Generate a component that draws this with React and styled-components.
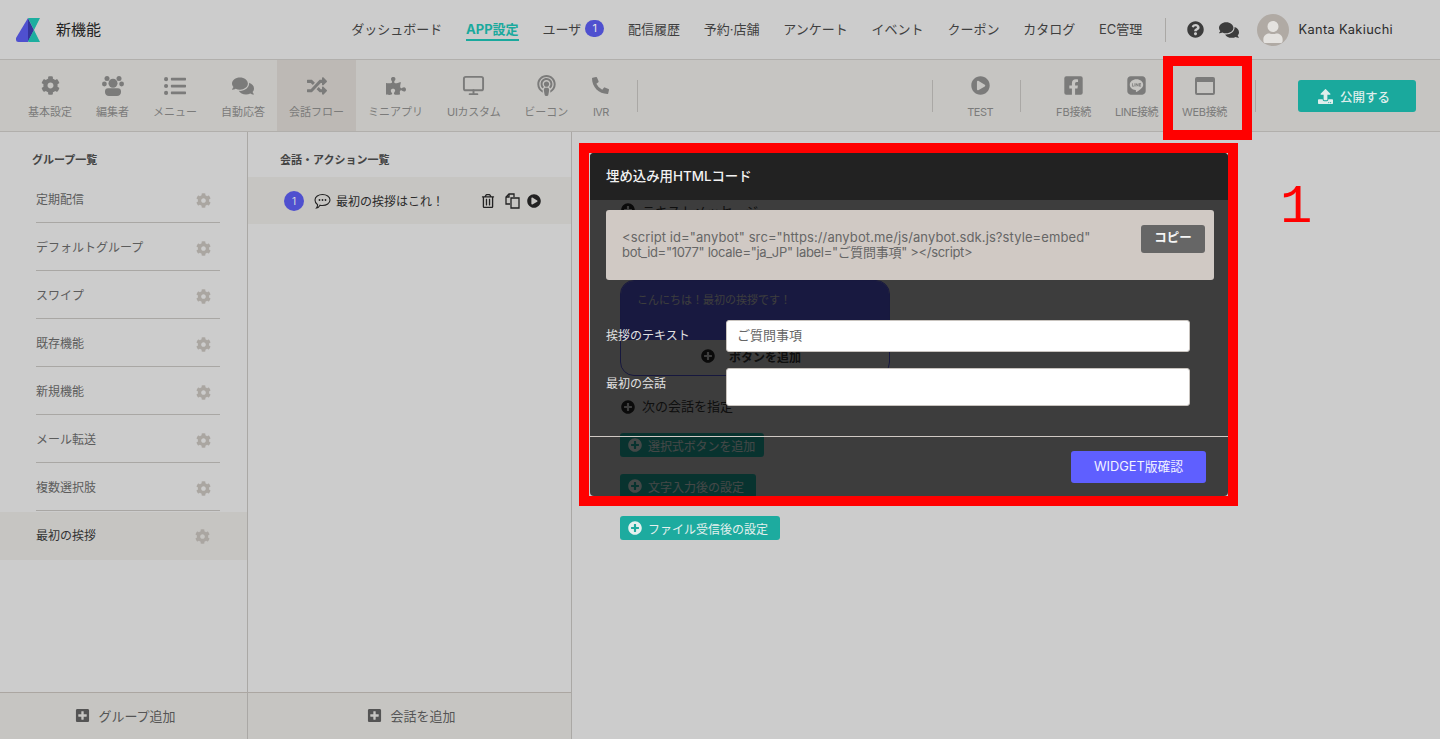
import React from "react";
import styled, { createGlobalStyle } from "styled-components";
import {
  FaCog, FaListUl, FaComments, FaRandom, FaPuzzlePiece, FaPodcast, FaPhoneAlt,
  FaPlayCircle, FaFacebookSquare, FaLine, FaQuestionCircle, FaUser, FaUpload, FaPlusCircle,
  FaPlusSquare, FaRegTrashAlt,
} from "react-icons/fa";
import { FiMonitor } from "react-icons/fi";

const Global = createGlobalStyle`
  html, body { margin: 0; padding: 0; height: 100%; background: #ccc; overflow: hidden; }
  body { font-family: Inter, "Noto Sans CJK JP", sans-serif; color: #333; }
  * { box-sizing: border-box; }
`;

const Page = styled.div`position: relative; width: 1440px; height: 739px; display: flex; flex-direction: column; overflow: hidden; background: #ccc;`;
const Header = styled.header`height: 60px; flex: none; display: flex; align-items: center; padding: 0 47px 0 16px; border-bottom: 1px solid #b1afac;`;
const BrandName = styled.div`margin: -2px 0 0 16px; font-size: 15px; color: #222;`;
const Nav = styled.nav`margin-left: auto; display: flex; align-items: center; gap: 23.8px; height: 100%;`;
const NavItem = styled.a`
  display: flex; align-items: center; gap: 4px; font-size: 13px; height: 23px; white-space: nowrap; padding-bottom: 1px;
  color: ${(p) => (p.$active ? "#1aa99d" : "#3f3f3f")};
  font-weight: ${(p) => (p.$active ? 700 : 400)};
  border-bottom: 2px solid ${(p) => (p.$active ? "#1aa99d" : "transparent")};
`;
const Badge = styled.span`width: 19px; height: 17px; border-radius: 9px; background: #4f50cf; color: #e6e6e6; font-size: 11px; display: flex; align-items: center; justify-content: center;`;
const VLine = styled.span`width: 1px; height: 24px; background: #aaa8a5; margin-left: -1px;`;
const HeadIcons = styled.div`display: flex; align-items: center; gap: 15px; color: #3c3c3c; font-size: 19px; margin-left: -3px;`;
const Avatar = styled.div`width: 32px; height: 32px; border-radius: 50%; background: #b0aaa4; color: #e4e2df; display: flex; align-items: flex-end; justify-content: center; font-size: 22px; overflow: hidden; margin-left: -6px; padding-bottom: 3px;`;
const UserName = styled.span`font-size: 12.8px; color: #2b2b2b; margin-left: -14px; letter-spacing: .33px;`;

const Toolbar = styled.div`height: 72px; flex: none; display: flex; padding: 0 24px 0 16px; background: #c6c5c2; border-bottom: 1px solid #b1afac;`;
const ToolItem = styled.div`
  height: 71px; padding: 14px 12px 0; display: flex; flex-direction: column; align-items: center;
  color: #7b7b7a; white-space: nowrap;
  background: ${(p) => (p.$active ? "#bdb9b5" : "transparent")};
`;
const ToolIcon = styled.div`height: 23px; display: flex; align-items: center; justify-content: center; font-size: ${(p) => p.$size || 20}px;`;
const ToolLabel = styled.div`font-size: 11px; line-height: 16px; margin-top: 7px; letter-spacing: ${(p) => p.$ls || 0}px;`;
const ToolSep = styled.span`width: 1px; height: 32px; margin: 20px ${(p) => p.$r || 0}px 0 ${(p) => p.$l || 0}px; background: #aaa8a5;`;
const Spacer = styled.div`flex: 1;`;
const Publish = styled.button`
  width: 118px; height: 32px; margin: 20px 0 0 42px; padding: 0 6px 0 0; border: 0; border-radius: 3px; background: #1aa99d; color: #dfeeec;
  font: 500 12.5px Inter, "Noto Sans CJK JP", sans-serif; display: flex; align-items: center; justify-content: center; gap: 7px;
  svg { font-size: 15px; }
`;

const Main = styled.div`flex: 1; display: flex; min-height: 0;`;
const Column = styled.section`width: ${(p) => p.$w}px; flex: none; display: flex; flex-direction: column; border-right: 1px solid #aaa8a5;`;
const ColTitle = styled.h2`margin: 0; height: ${(p) => p.$h}px; padding: 21px 0 0 ${(p) => p.$pad}px; font-size: 11px; line-height: 14px; font-weight: 700; color: #444;`;
const ColBody = styled.div`flex: 1;`;
const GroupRow = styled.div`height: 48px; display: flex; align-items: center; padding: 0 36px 0 36px; background: ${(p) => (p.$active ? "#c6c5c2" : "transparent")}; color: ${(p) => (p.$active ? "#333" : "#5c5c5c")};`;
const GroupLine = styled.div`height: 1px; margin: -2px 27px 1px 36px; background: #a9a7a4;`;
const GroupName = styled.span`flex: 1; font-size: 12px; margin-top: -3px;`;
const Gear = styled(FaCog)`color: #aaa6a1; font-size: 15px; margin-right: ${(p) => (p.$shift ? "1px" : 0)};`;
const Footer = styled.div`height: 47px; padding: 0 0 2px 4px; border-top: 1px solid #aba6a1; background: #c6c5c2; display: flex; align-items: center; justify-content: center; gap: 8px; font-size: 13px; color: #555; svg { font-size: 15px; color: #545454; }`;
const FlowRow = styled.div`height: 47px; background: #c6c5c2; display: flex; align-items: center; padding: 0 30px 0 36px; color: #333;`;
const StepNum = styled.span`width: 20px; height: 20px; border-radius: 50%; background: #4f50cf; color: #ddd; font-size: 10px; display: flex; align-items: center; justify-content: center;`;
const FlowText = styled.span`flex: 1; font-size: 12px; margin-left: 5px; color: #2b2b2b;`;
const RowIcons = styled.div`display: flex; align-items: center; gap: 6px; font-size: 14px; color: #222;`;
const Trash = styled(FaRegTrashAlt)`margin-right: 4px;`;
const ChatGlyph = styled.svg`margin-left: 10px; flex: none;`;

const Canvas = styled.div`flex: 1; padding: 68px 0 0 48px; display: flex; flex-direction: column; align-items: flex-start;`;
const AddLine = styled.div`display: flex; align-items: center; gap: 7px; height: 20px; font-size: 13px; color: #333; padding-left: 1px; svg { font-size: 14px; color: #222; }`;
const AddText = styled.span`margin-top: ${(p) => p.$up || 0}px;`;
const Bubble = styled.div`width: 270px; height: 96px; margin: 60px 0 21px; border: 1px solid #4f50cf; border-radius: 14px; display: flex; flex-direction: column; overflow: hidden;`;
const BubbleText = styled.div`height: 59px; padding: 11px 16px; background: #5255d6; font-size: 11px; line-height: 16px; color: #ccc;`;
const BubbleAdd = styled.div`flex: 1; display: flex; align-items: center; justify-content: center; gap: 14px; padding: 0 8px 3px 0; font-size: 12px; font-weight: 700; color: #333; svg { font-size: 14px; color: #222; }`;
const TealButton = styled.div`width: ${(p) => p.$w}px; height: 24px; margin-top: ${(p) => p.$mt}px; padding-left: 8px; border-radius: 3px; background: #1dab9f; color: #e4f0ee; font-size: 12px; letter-spacing: ${(p) => p.$ls || 0}px; display: flex; align-items: center; gap: 6px; white-space: nowrap; svg { font-size: 14px; }`;

const Backdrop = styled.div`position: absolute; left: 590px; top: 153px; width: 638px; height: 343px; border-radius: 4px; overflow: hidden; background: rgba(0,0,0,.7); display: flex; flex-direction: column;`;
const ModalHead = styled.div`height: 47px; flex: none; background: #222; color: #f2f2f2; font-size: 13.4px; font-weight: 500; display: flex; align-items: center; padding: 0 0 4px 16px;`;
const ModalBody = styled.div`flex: 1; padding: 10px 14px 0 16px;`;
const CodeBox = styled.div`height: 70px; width: 608px; background: #d0c9c4; border-radius: 3px; padding: 20px 9px 0 16px; display: flex; justify-content: space-between; align-items: flex-start;`;
const Code = styled.div`font-size: 13px; line-height: 15px; color: #666; white-space: nowrap;`;
const CodeLine = styled.div`letter-spacing: ${(p) => p.$ls}px;`;
const CopyButton = styled.button`width: 64px; height: 28px; margin-top: -5px; padding: 0 0 5px; border: 0; border-radius: 3px; background: #666; color: #f5f5f5; font: 700 12.5px "Noto Sans CJK JP", sans-serif;`;
const FormRow = styled.div`display: flex; align-items: center; margin-top: ${(p) => p.$mt}px;`;
const FormLabel = styled.label`width: 120px; font-size: 12px; color: #e0e0e0; margin-top: ${(p) => p.$mt || 0}px;`;
const TextField = styled.div`width: 464px; height: ${(p) => p.$h}px; background: #fff; border: 1px solid #c9c4bf; border-radius: 3px; padding: 0 10px 4px; display: flex; align-items: center; font-size: 13px; color: #666;`;
const ModalFoot = styled.div`height: 60px; flex: none; border-top: 1px solid #d0c9c4; display: flex; justify-content: flex-end; padding: 14px 22px 0 0;`;
const WidgetButton = styled.button`width: 135px; height: 32px; padding: 0 0 4px; border: 0; border-radius: 3px; background: #5f5fff; color: #f2f2ff; font: 400 12.8px Inter, "Noto Sans CJK JP", sans-serif;`;

const RedFrame = styled.div`position: absolute; left: ${(p) => p.$x}px; top: ${(p) => p.$y}px; width: ${(p) => p.$w}px; height: ${(p) => p.$h}px; border: 10px solid #f00;`;
const RedNumber = styled.div`position: absolute; left: 1280px; top: 178px; font: 400 54px/60px "Liberation Mono", monospace; color: #f00;`;

const Logo = () => (
  <svg width="24" height="24" viewBox="0 0 24 24">
    <path d="M12 0L0 20v1.5A2.5 2.5 0 0 0 2.5 24H12z" fill="#4f50cf" />
    <path d="M12 0l6 12-6 12z" fill="#34349a" />
    <path d="M12 0h12l-6 12 6 12H14a2 2 0 0 1-2-1l6-11z" fill="#1cae9f" />
  </svg>
);
const UsersIcon = () => (
  <svg width="22" height="20" viewBox="0 0 22 20" fill="currentColor">
    <circle cx="5" cy="2.500" r="2.500" />
    <circle cx="17" cy="2.500" r="2.500" />
    <circle cx="2.400" cy="8" r="2.400" />
    <circle cx="19.600" cy="8" r="2.400" />
    <circle cx="11" cy="7.300" r="4.500" />
    <path d="M6 12.300h10c1.800 0 3 1.200 3 3v1c0 2.200-1.800 3.700-4 3.700H7c-2.200 0-4-1.500-4-3.700v-1c0-1.800 1.200-3 3-3z" />
  </svg>
);
const WindowIcon = () => (
  <svg width="20" height="18" viewBox="0 0 20 18">
    <path fillRule="evenodd" d="M2 0h16a2 2 0 0 1 2 2v14a2 2 0 0 1-2 2H2a2 2 0 0 1-2-2V2a2 2 0 0 1 2-2zm0 5v11h16V5z" fill="currentColor" />
  </svg>
);
const CopyIcon = () => (
  <svg width="16" height="16" viewBox="0 0 16 16" fill="none" stroke="#222" strokeWidth="1.3">
    <path d="M5 11H1V4l3-3h5v3" />
    <path d="M4 1v3H1" />
    <path d="M6 5h8v10H6z" />
  </svg>
);
const SpeechIcon = () => (
  <ChatGlyph width="17" height="16" viewBox="0 0 17 16" fill="none" stroke="#222" strokeWidth="1.1">
    <path d="M8.500 1.500c4 0 7.500 2.300 7.500 5.500s-3.500 5.500-7.500 5.500c-.9 0-1.700-.1-2.500-.3C5 14 3.600 14.800 2.500 15c.7-.9 1.100-2 1.100-3.200C1.900 10.700 1 9 1 7c0-3.200 3.500-5.500 7.500-5.500z" />
    <circle cx="5.500" cy="7" r=".9" fill="#222" stroke="none" />
    <circle cx="8.500" cy="7" r=".9" fill="#222" stroke="none" />
    <circle cx="11.500" cy="7" r=".9" fill="#222" stroke="none" />
  </ChatGlyph>
);

const leftTools = [
  ["基本設定", <FaCog />, 19], ["編集者", <UsersIcon />], ["メニュー", <FaListUl />, 22], ["自動応答", <FaComments />, 22],
  ["会話フロー", <FaRandom />, 20, true], ["ミニアプリ", <FaPuzzlePiece />, 20], ["UIカスタム", <FiMonitor />, 23, false, -0.3],
  ["ビーコン", <FaPodcast />, 21], ["IVR", <FaPhoneAlt />, 17, false, -0.6],
];
const navItems = ["ダッシュボード", "APP設定", "ユーザ", "配信履歴", "予約·店舗", "アンケート", "イベント", "クーポン", "カタログ", "EC管理"];
const groups = ["定期配信", "デフォルトグループ", "スワイプ", "既存機能", "新規機能", "メール転送", "複数選択肢"];

const Tool = ({ label, icon, size, active, ls }) => (
  <ToolItem $active={active}>
    <ToolIcon $size={size}>{icon}</ToolIcon>
    <ToolLabel $ls={ls}>{label}</ToolLabel>
  </ToolItem>
);

export default function App() {
  return (
    <Page>
      <Global />
      <Header>
        <Logo />
        <BrandName>新機能</BrandName>
        <Nav>
          {navItems.map((n) => (
            <NavItem key={n} $active={n === "APP設定"}>
              {n}
              {n === "ユーザ" && <Badge>1</Badge>}
            </NavItem>
          ))}
          <VLine />
          <HeadIcons>
            <FaQuestionCircle style={{ fontSize: 17 }} />
            <FaComments style={{ fontSize: 20 }} />
          </HeadIcons>
          <Avatar><FaUser /></Avatar>
          <UserName>Kanta Kakiuchi</UserName>
        </Nav>
      </Header>
      <Toolbar>
        {leftTools.map(([l, i, s, a, ls]) => <Tool key={l} label={l} icon={i} size={s} active={a} ls={ls} />)}
        <ToolSep $l={16} />
        <Spacer />
        <ToolSep $r={22} />
        <Tool label="TEST" icon={<FaPlayCircle />} size={19} ls={-0.5} />
        <ToolSep $l={15} $r={23} />
        <Tool label="FB接続" icon={<FaFacebookSquare />} size={21} ls={-0.2} />
        <Tool label="LINE接続" icon={<FaLine />} size={21} ls={-0.5} />
        <Tool label="WEB接続" icon={<WindowIcon />} ls={-0.35} />
        <ToolSep $l={16} />
        <Publish><FaUpload />公開する</Publish>
      </Toolbar>
      <Main>
        <Column $w={248}>
          <ColTitle $h={44} $pad={32}>グループ一覧</ColTitle>
          <ColBody>
            {groups.map((g) => (
              <React.Fragment key={g}>
                <GroupRow><GroupName>{g}</GroupName><Gear /></GroupRow>
                <GroupLine />
              </React.Fragment>
            ))}
            <GroupRow $active><GroupName>最初の挨拶</GroupName><Gear $shift /></GroupRow>
          </ColBody>
          <Footer><FaPlusSquare />グループ追加</Footer>
        </Column>
        <Column $w={324}>
          <ColTitle $h={45} $pad={32}>会話・アクション一覧</ColTitle>
          <ColBody>
            <FlowRow>
              <StepNum>1</StepNum>
              <SpeechIcon />
              <FlowText>最初の挨拶はこれ！</FlowText>
              <RowIcons><Trash /><CopyIcon /><FaPlayCircle /></RowIcons>
            </FlowRow>
          </ColBody>
          <Footer><FaPlusSquare />会話を追加</Footer>
        </Column>
        <Canvas>
          <AddLine><FaPlusCircle /><AddText>テキストメッセージ</AddText></AddLine>
          <Bubble>
            <BubbleText>こんにちは！最初の挨拶です！</BubbleText>
            <BubbleAdd><FaPlusCircle />ボタンを追加</BubbleAdd>
          </Bubble>
          <AddLine><FaPlusCircle /><AddText $up={-4}>次の会話を指定</AddText></AddLine>
          <TealButton $w={144} $mt={16} $ls={-0.1}><FaPlusCircle />選択式ボタンを追加</TealButton>
          <TealButton $w={136} $mt={17}><FaPlusCircle />文字入力後の設定</TealButton>
          <TealButton $w={160} $mt={18}><FaPlusCircle />ファイル受信後の設定</TealButton>
        </Canvas>
      </Main>
      <Backdrop>
        <ModalHead>埋め込み用HTMLコード</ModalHead>
        <ModalBody>
          <CodeBox>
            <Code>
              <CodeLine $ls={0.1}>{'<script id="anybot" src="https://anybot.me/js/anybot.sdk.js?style=embed"'}</CodeLine>
              <CodeLine $ls={-0.31}>{'bot_id="1077" locale="ja_JP" label="ご質問事項" ></script>'}</CodeLine>
            </Code>
            <CopyButton>コピー</CopyButton>
          </CodeBox>
          <FormRow $mt={40}>
            <FormLabel $mt={-3}>挨拶のテキスト</FormLabel>
            <TextField $h={32}>ご質問事項</TextField>
          </FormRow>
          <FormRow $mt={16}>
            <FormLabel $mt={-10}>最初の会話</FormLabel>
            <TextField $h={38} />
          </FormRow>
        </ModalBody>
        <ModalFoot><WidgetButton>WIDGET版確認</WidgetButton></ModalFoot>
      </Backdrop>
      <RedFrame $x={579} $y={143} $w={659} $h={363} />
      <RedFrame $x={1163} $y={56} $w={89} $h={84} />
      <RedNumber>1</RedNumber>
    </Page>
  );
}
